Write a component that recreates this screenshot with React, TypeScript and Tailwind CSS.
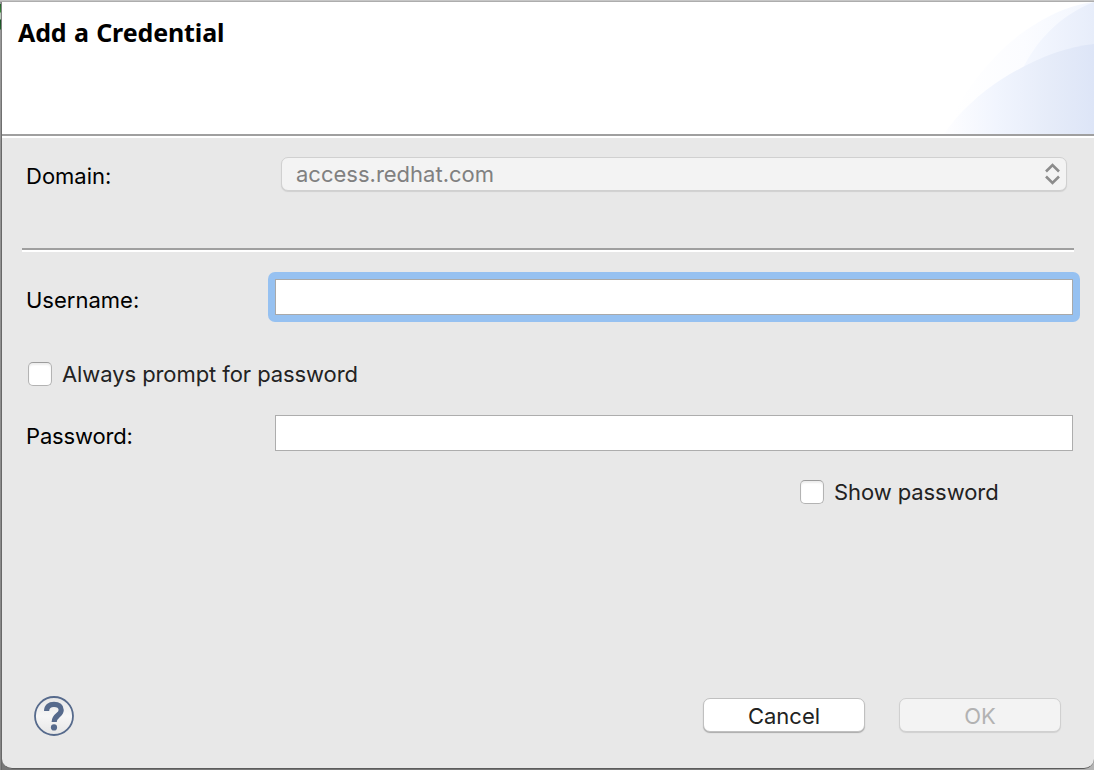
import React from "react";

function HeaderArt() {
  return (
    <svg width="160" height="132" viewBox="0 0 160 132" className="block">
      <defs>
        <linearGradient id="outer" gradientUnits="userSpaceOnUse" x1="20" y1="0" x2="160" y2="0">
          <stop offset="0" stopColor="#ffffff" />
          <stop offset="0.5" stopColor="#fbfcff" />
          <stop offset="1" stopColor="#f2f6fe" />
        </linearGradient>
        <linearGradient id="middle" gradientUnits="userSpaceOnUse" x1="90" y1="0" x2="160" y2="0">
          <stop offset="0" stopColor="#f5f8ff" />
          <stop offset="1" stopColor="#e7edfa" />
        </linearGradient>
        <linearGradient id="front" gradientUnits="userSpaceOnUse" x1="10" y1="0" x2="160" y2="0">
          <stop offset="0" stopColor="#fefeff" />
          <stop offset="0.35" stopColor="#f1f5fe" />
          <stop offset="0.7" stopColor="#e6ecf9" />
          <stop offset="1" stopColor="#dde5f7" />
        </linearGradient>
      </defs>
      <path d="M10 132C28 88 66 43 100 23C122 9 142 2 160 0V132Z" fill="url(#outer)" />
      <path d="M88 68C101 41 124 14 160 0V132H88Z" fill="url(#middle)" />
      <path d="M10 132C24 111 46 91 68 77C98 58 130 45 160 42V132Z" fill="url(#front)" />
    </svg>
  );
}

function Checkbox({ label }: { label: string }) {
  return (
    <label className="flex h-6 items-center gap-2.5">
      <span className="size-6 shrink-0 rounded-[5px] border border-[#b3b3b3] border-t-[#9c9c9c] bg-white shadow-[inset_0_2px_2px_#eeeeee]" />
      <span className="tracking-[-0.08px] whitespace-nowrap text-[#222222]">{label}</span>
    </label>
  );
}

function Rule() {
  return <div className="h-1 border-t-2 border-b-2 border-t-[#9f9f9f] border-b-white" />;
}

export default function App() {
  return (
    <div className="h-[770px] w-[1094px] overflow-hidden bg-[linear-gradient(90deg,#777_0%,#777_85%,#b5b5b5_100%)] font-['Inter','Liberation_Sans',sans-serif] text-[22px] leading-6 text-black">
      <div className="h-px bg-[#c6c6c6]" />
      <div className="h-px bg-[#adadad]" />
      <div className="flex h-[768px]">
        <div className="w-px bg-[linear-gradient(#999_0,#999_2px,#24652c_2px,#3a863a_10px,#b8c8b8_11px,#b8c8b8_17px,#175024_18px,#24652c_27px,#999_28px,#858585_100%)]" />
        <div className="w-px bg-[linear-gradient(#858585,#686868_20%,#686868)]" />
        <main className="flex h-[767px] w-[1092px] flex-col rounded-b-[10px] border-b border-[#5c5c5c] bg-[#e8e8e8]">
          <header className="flex h-[132px] shrink-0 justify-between bg-white pl-4">
            <h1 className="pt-4 font-['Noto_Sans','Open_Sans',sans-serif] text-[25px] leading-7 font-bold tracking-[-0.12px] [word-spacing:1px]">
              Add a Credential
            </h1>
            <HeaderArt />
          </header>
          <Rule />
          <div className="flex h-[110px] items-start pt-[19px] pl-6">
            <span className="w-[255px] pt-[7px]">Domain:</span>
            <div className="flex h-[34px] w-[786px] items-center justify-between rounded-[7px] border border-[#d0d0d0] bg-[#f3f3f3] pr-[6px] pl-[14px] text-[#808080] shadow-[0_1px_1px_#d0d0d0]">
              <span>access.redhat.com</span>
              <svg width="15" height="22" viewBox="0 0 15 22" fill="none" stroke="#8c8c8c" strokeWidth="2.6">
                <path d="M1 8.5 7.5 2 14 8.5M1 13.5 7.5 20 14 13.5" />
              </svg>
            </div>
          </div>
          <div className="px-5">
            <Rule />
          </div>
          <div className="flex h-[70px] pt-5 pl-6">
            <span className="w-[242px] pt-4">Username:</span>
            <div className="h-[50px] w-[812px] rounded-[7px] bg-[#96c1f1] p-[7px]">
              <input aria-label="Username" className="block h-9 w-[798px] border border-[#a9a9a9] bg-white px-2 outline-none" />
            </div>
          </div>
          <div className="mt-10 pl-[26px]">
            <Checkbox label="Always prompt for password" />
          </div>
          <div className="mt-[29px] flex pl-6">
            <span className="w-[249px] pt-[9px] tracking-[-0.15px]">Password:</span>
            <input type="password" aria-label="Password" className="h-9 w-[798px] border border-[#adadad] bg-white px-2 outline-none" />
          </div>
          <div className="mt-[29px] pl-[798px]">
            <Checkbox label="Show password" />
          </div>
          <footer className="mt-auto flex items-start pb-8 pl-8">
            <svg width="40" height="40" viewBox="0 0 40 40" aria-label="Help">
              <defs>
                <linearGradient id="help" x1="0" y1="0" x2="0" y2="1">
                  <stop offset="0" stopColor="#e6e6e6" />
                  <stop offset="0.5" stopColor="#f6f6f6" />
                  <stop offset="1" stopColor="#e6e6e6" />
                </linearGradient>
              </defs>
              <circle cx="20" cy="20" r="19" fill="url(#help)" stroke="#566a8c" strokeWidth="1.8" />
              <path d="M12.6 15C12.6 10.5 15.5 8.3 20 8.3C24.5 8.3 27.2 10.6 27.2 14C27.2 19.4 20.2 19 20.2 26" fill="none" stroke="#566a8c" strokeWidth="5.2" />
              <circle cx="20" cy="31.4" r="3.1" fill="#566a8c" />
            </svg>
            <button className="mt-0.5 ml-[629px] h-[34px] w-[162px] rounded-[7px] border border-[#c0c0c0] bg-white pt-0.5 text-[#222222] shadow-[0_1px_1px_#aaaaaa]">Cancel</button>
            <button disabled className="mt-0.5 ml-[34px] h-[34px] w-[162px] rounded-[7px] border border-[#d0d0d0] bg-[#f3f3f3] pt-0.5 text-[#b2b2b2] shadow-[0_1px_1px_#d0d0d0]">OK</button>
          </footer>
        </main>
      </div>
    </div>
  );
}
